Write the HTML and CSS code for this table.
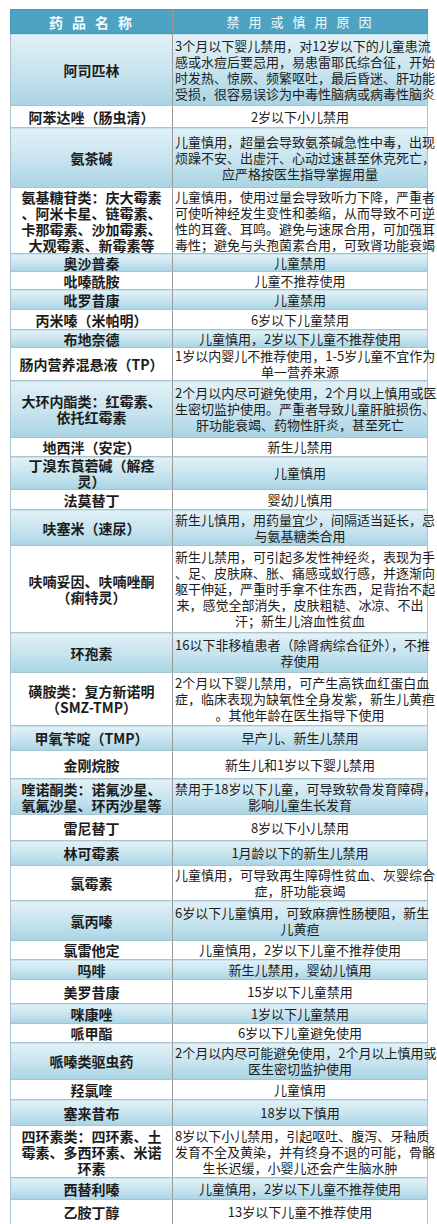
FILE: index.html
```html
<!DOCTYPE html>
<html lang="zh-CN">
<head>
<meta charset="utf-8">
<title>儿童禁用或慎用药品</title>
<link rel="stylesheet" href="styles.css">
</head>
<body>
<table class="drugs">
  <thead>
    <tr class="r24"><th class="name">药品名称</th><th class="why">禁用或慎用原因</th></tr>
  </thead>
  <tbody>
    <tr class="r72"><td class="name">阿司匹林</td><td class="why">3个月以下婴儿禁用，对12岁以下的儿童患流<br>感或水痘后要忌用，易患雷耶氏综合征，开始<br>时发热、惊厥、频繁呕吐，最后昏迷、肝功能<br>受损，很容易误诊为中毒性脑病或病毒性脑炎</td></tr>
    <tr class="r22"><td class="name">阿苯达唑（肠虫清）</td><td class="why">2岁以下小儿禁用</td></tr>
    <tr class="r60"><td class="name">氨茶碱</td><td class="why">儿童慎用，超量会导致氨茶碱急性中毒，出现<br>烦躁不安、出虚汗、心动过速甚至休克死亡，<br>应严格按医生指导掌握用量</td></tr>
    <tr class="r66"><td class="name">氨基糖苷类：庆大霉素<br>、阿米卡星、链霉素、<br>卡那霉素、沙加霉素、<br>大观霉素、新霉素等</td><td class="why">儿童慎用，使用过量会导致听力下降，严重者<br>可使听神经发生变性和萎缩，从而导致不可逆<br>性的耳聋、耳鸣。避免与速尿合用，可加强耳<br>毒性；避免与头孢菌素合用，可致肾功能衰竭</td></tr>
    <tr class="r18"><td class="name">奥沙普秦</td><td class="why">儿童禁用</td></tr>
    <tr class="r18"><td class="name">吡嗪酰胺</td><td class="why">儿童不推荐使用</td></tr>
    <tr class="r20"><td class="name">吡罗昔康</td><td class="why">儿童禁用</td></tr>
    <tr class="r20"><td class="name">丙米嗪（米帕明）</td><td class="why">6岁以下儿童禁用</td></tr>
    <tr class="r18"><td class="name">布地奈德</td><td class="why">儿童慎用，2岁以下儿童不推荐使用</td></tr>
    <tr class="r31"><td class="name">肠内营养混悬液（TP）</td><td class="why">1岁以内婴儿不推荐使用，1-5岁儿童不宜作为<br>单一营养来源</td></tr>
    <tr class="r57"><td class="name">大环内酯类：红霉素、<br>依托红霉素</td><td class="why">2个月以内尽可避免使用，2个月以上慎用或医<br>生密切监护使用。严重者导致儿童肝脏损伤、<br>肝功能衰竭、药物性肝炎，甚至死亡</td></tr>
    <tr class="r19"><td class="name">地西泮（安定）</td><td class="why">新生儿禁用</td></tr>
    <tr class="r33"><td class="name">丁溴东莨菪碱（解痉<br>灵）</td><td class="why">儿童慎用</td></tr>
    <tr class="r20"><td class="name">法莫替丁</td><td class="why">婴幼儿慎用</td></tr>
    <tr class="r36"><td class="name">呋塞米（速尿）</td><td class="why">新生儿慎用，用药量宜少，间隔适当延长，忌<br>与氨基糖类合用</td></tr>
    <tr class="r87"><td class="name">呋喃妥因、呋喃唑酮<br>（痢特灵）</td><td class="why">新生儿禁用，可引起多发性神经炎，表现为手<br>、足、皮肤麻、胀、痛感或蚁行感，并逐渐向<br>躯干伸延，严重时手拿不住东西，足背抬不起<br>来，感觉全部消失，皮肤粗糙、冰凉、不出<br>汗；新生儿溶血性贫血</td></tr>
    <tr class="r40"><td class="name">环孢素</td><td class="why">16以下非移植患者（除肾病综合征外），不推<br>荐使用</td></tr>
    <tr class="r53"><td class="name">磺胺类：复方新诺明<br>（SMZ-TMP）</td><td class="why">2个月以下婴儿禁用，可产生高铁血红蛋白血<br>症，临床表现为缺氧性全身发紫，新生儿黄疸<br>。其他年龄在医生指导下使用</td></tr>
    <tr class="r25"><td class="name">甲氧苄啶（TMP）</td><td class="why">早产儿、新生儿禁用</td></tr>
    <tr class="r28"><td class="name">金刚烷胺</td><td class="why">新生儿和1岁以下婴儿禁用</td></tr>
    <tr class="r36"><td class="name">喹诺酮类：诺氟沙星、<br>氧氟沙星、环丙沙星等</td><td class="why">禁用于18岁以下儿童，可导致软骨发育障碍，<br>影响儿童生长发育</td></tr>
    <tr class="r26"><td class="name">雷尼替丁</td><td class="why">8岁以下小儿禁用</td></tr>
    <tr class="r25"><td class="name">林可霉素</td><td class="why">1月龄以下的新生儿禁用</td></tr>
    <tr class="r35"><td class="name">氯霉素</td><td class="why">儿童慎用，可导致再生障碍性贫血、灰婴综合<br>症，肝功能衰竭</td></tr>
    <tr class="r40"><td class="name">氯丙嗪</td><td class="why">6岁以下儿童慎用，可致麻痹性肠梗阻，新生<br>儿黄疸</td></tr>
    <tr class="r19"><td class="name">氯雷他定</td><td class="why">儿童慎用，2岁以下儿童不推荐使用</td></tr>
    <tr class="r20"><td class="name">吗啡</td><td class="why">新生儿禁用，婴幼儿慎用</td></tr>
    <tr class="r24"><td class="name">美罗昔康</td><td class="why">15岁以下儿童禁用</td></tr>
    <tr class="r20"><td class="name">咪康唑</td><td class="why">1岁以下儿童禁用</td></tr>
    <tr class="r19"><td class="name">哌甲酯</td><td class="why">6岁以下儿童避免使用</td></tr>
    <tr class="r37"><td class="name">哌嗪类驱虫药</td><td class="why">2个月以内尽可能避免使用，2个月以上慎用或<br>医生密切监护使用</td></tr>
    <tr class="r20"><td class="name">羟氯喹</td><td class="why">儿童慎用</td></tr>
    <tr class="r26"><td class="name">塞来昔布</td><td class="why">18岁以下慎用</td></tr>
    <tr class="r52"><td class="name">四环素类：四环素、土<br>霉素、多西环素、米诺<br>环素</td><td class="why">8岁以下小儿禁用，引起呕吐、腹泻、牙釉质<br>发育不全及黄染，并有终身不退的可能，骨骼<br>生长迟缓，小婴儿还会产生脑水肿</td></tr>
    <tr class="r22"><td class="name">西替利嗪</td><td class="why">儿童慎用，2岁以下儿童不推荐使用</td></tr>
    <tr class="r25"><td class="name">乙胺丁醇</td><td class="why">13岁以下儿童不推荐使用</td></tr>
  </tbody>
</table>
</body>
</html>
```

FILE: styles.css
```css
html, body {
  margin: 0;
  padding: 0;
  background: #ffffff;
}

body {
  padding: 9px 0 0 10px;
  font-family: "Noto Sans CJK SC", "Noto Sans", sans-serif;
  color: #1c1c1c;
}

.drugs {
  width: 418px;
  border-collapse: collapse;
  table-layout: fixed;
  border: 1px solid #9fbfcd;
}

.drugs th,
.drugs td {
  padding: 0 2px;
  text-align: center;
  vertical-align: middle;
  white-space: nowrap;
  line-height: 16px;
  border: 1px solid #a9c3cf;
}

.drugs .name {
  width: 150px;
  font-weight: 700;
  font-size: 14px;
  border-right-color: #9a9a9a;
}

.drugs .why {
  font-size: 13px;
  font-weight: 400;
}

.drugs thead th {
  background: #4ea3c3;
  color: #f4fbff;
  font-size: 13px;
  font-weight: 700;
  letter-spacing: 9px;
  border-color: #4a98b6;
  padding-left: 9px;
}

.drugs tbody tr:nth-child(odd) td {
  background: linear-gradient(to bottom, #e2f1f7 0%, #c6e3ee 55%, #a9d4e4 100%);
}

.drugs tbody tr:nth-child(even) td {
  background: #ffffff;
}

.r18 { height: 18px; }
.r19 { height: 19px; }
.r20 { height: 20px; }
.r22 { height: 22px; }
.r24 { height: 24px; }
.r25 { height: 25px; }
.r26 { height: 26px; }
.r28 { height: 28px; }
.r31 { height: 31px; }
.r33 { height: 33px; }
.r35 { height: 35px; }
.r36 { height: 36px; }
.r37 { height: 37px; }
.r40 { height: 40px; }
.r52 { height: 52px; }
.r53 { height: 53px; }
.r57 { height: 57px; }
.r60 { height: 60px; }
.r66 { height: 66px; }
.r72 { height: 72px; }
.r87 { height: 87px; }
```
